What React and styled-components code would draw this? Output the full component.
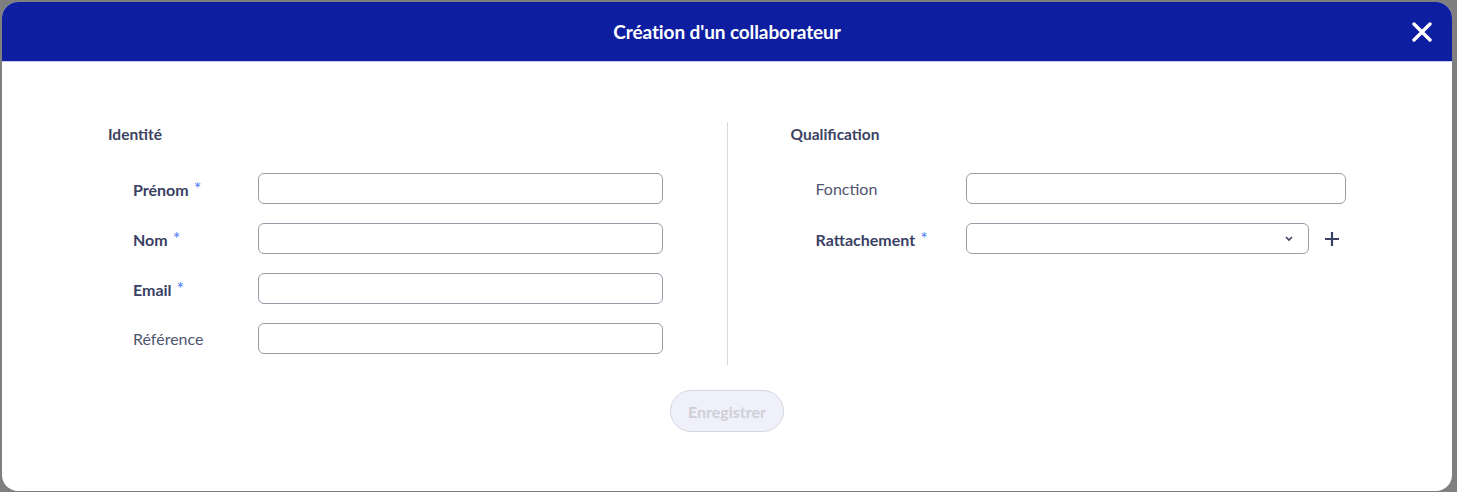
import React from "react";
import styled, { createGlobalStyle } from "styled-components";

const Global = createGlobalStyle`
  html, body { margin: 0; padding: 0; height: 100%; }
  body { background: #7f7f80; font-family: Lato, "Noto Sans", sans-serif; overflow: hidden; }
  #root { height: 100%; }
`;

const Backdrop = styled.div`
  height: 492px;
  padding: 2px 5px 0 2px;
  box-sizing: border-box;
  display: flex;
`;

const Modal = styled.div`
  flex: 1;
  height: 489px;
  background: #fff;
  border-radius: 16px;
  overflow: hidden;
  display: flex;
  flex-direction: column;
`;

const Header = styled.div`
  height: 59px;
  background: #0e1ea0;
  border-bottom: 1px solid #c9ccef;
  display: flex;
  align-items: center;
  justify-content: center;
  position: relative;
  color: #fff;
`;

const Title = styled.h1`
  margin: 0;
  font-size: 19px;
  font-weight: 700;
  letter-spacing: -0.1px;
`;

const Close = styled.button`
  position: absolute;
  right: 20px;
  top: 20px;
  width: 20px;
  height: 20px;
  padding: 0;
  border: 0;
  background: none;
  cursor: pointer;
  display: flex;
`;

const Body = styled.div`
  padding: 60px 106px 0;
  display: flex;
  flex-direction: column;
  align-items: center;
`;

const Columns = styled.div`
  display: grid;
  grid-template-columns: 1fr 1px 1fr;
  width: 100%;
`;

const Divider = styled.div`
  background: #d9d9df;
  height: 243px;
`;

const Column = styled.section`
  padding: ${p => (p.$side === "left" ? "0 64px 0 0" : "0 0 0 63px")};
`;

const SectionTitle = styled.h2`
  margin: 3px 0 0;
  font-size: 15.5px;
  font-weight: 700;
  color: #3c4262;
  line-height: 18px;
`;

const Fields = styled.div`
  margin-top: 30px;
  display: flex;
  flex-direction: column;
  gap: 19px;
  padding-left: 25px;
`;

const Row = styled.div`
  display: grid;
  grid-template-columns: ${p => p.$labelWidth}px 1fr auto;
  align-items: center;
`;

const Label = styled.label`
  font-size: 16px;
  font-weight: ${p => (p.$required ? 700 : 400)};
  color: ${p => (p.$required ? "#3a4163" : "#4f556f")};
`;

const Star = styled.span`
  color: #4b7df5;
  font-weight: 400;
  margin-left: 5px;
  vertical-align: 1px;
  font-size: 18px;
  line-height: 1;
`;

const Input = styled.input`
  box-sizing: border-box;
  height: 31px;
  width: 100%;
  border: 1px solid #9b9ba8;
  border-radius: 6px;
  background: #fff;
  padding: 0 10px;
  font: inherit;
`;

const SelectBox = styled.div`
  box-sizing: border-box;
  height: 31px;
  border: 1px solid #9b9ba8;
  border-radius: 6px;
  display: flex;
  align-items: center;
  justify-content: flex-end;
  padding-right: 14px;
`;

const AddButton = styled.button`
  width: 20px;
  height: 20px;
  margin-left: 13px;
  margin-right: 4px;
  padding: 0;
  border: 0;
  background: none;
  display: flex;
  align-items: center;
  justify-content: center;
`;

const Save = styled.button`
  margin-top: 25px;
  height: 42px;
  padding: 0 17px;
  border-radius: 21px;
  border: 1px solid #d6d6e0;
  background: #f0f0fa;
  color: #cfcfd6;
  font: 700 16px Lato, "Noto Sans", sans-serif;
`;

const Field = ({ label, required, labelWidth, children, extra }) => (
  <Row $labelWidth={labelWidth}>
    <Label $required={required}>
      {label}
      {required && <Star>*</Star>}
    </Label>
    {children}
    {extra || <span />}
  </Row>
);

export default function App() {
  return (
    <>
      <Global />
      <Backdrop>
        <Modal>
          <Header>
            <Title>Création d'un collaborateur</Title>
            <Close aria-label="Fermer">
              <svg width="20" height="20" viewBox="0 0 20 20">
                <path d="M2 2L18 18M18 2L2 18" stroke="#fff" strokeWidth="3.4" strokeLinecap="round" />
              </svg>
            </Close>
          </Header>
          <Body>
            <Columns>
              <Column $side="left">
                <SectionTitle>Identité</SectionTitle>
                <Fields>
                  <Field label="Prénom" required labelWidth={125}><Input /></Field>
                  <Field label="Nom" required labelWidth={125}><Input /></Field>
                  <Field label="Email" required labelWidth={125}><Input /></Field>
                  <Field label="Référence" labelWidth={125}><Input /></Field>
                </Fields>
              </Column>
              <Divider />
              <Column $side="right">
                <SectionTitle>Qualification</SectionTitle>
                <Fields>
                  <Field label="Fonction" labelWidth={150}><Input /></Field>
                  <Field
                    label="Rattachement"
                    required
                    labelWidth={150}
                    extra={
                      <AddButton aria-label="Ajouter">
                        <svg width="16" height="16" viewBox="0 0 16 16">
                          <path d="M8 1V15M1 8H15" stroke="#3a4163" strokeWidth="2.2" />
                        </svg>
                      </AddButton>
                    }
                  >
                    <SelectBox>
                      <svg width="10" height="7" viewBox="0 0 10 7">
                        <path d="M2 2L5 5L8 2" stroke="#3a4163" strokeWidth="1.6" fill="none" />
                      </svg>
                    </SelectBox>
                  </Field>
                </Fields>
              </Column>
            </Columns>
            <Save disabled>Enregistrer</Save>
          </Body>
        </Modal>
      </Backdrop>
    </>
  );
}
